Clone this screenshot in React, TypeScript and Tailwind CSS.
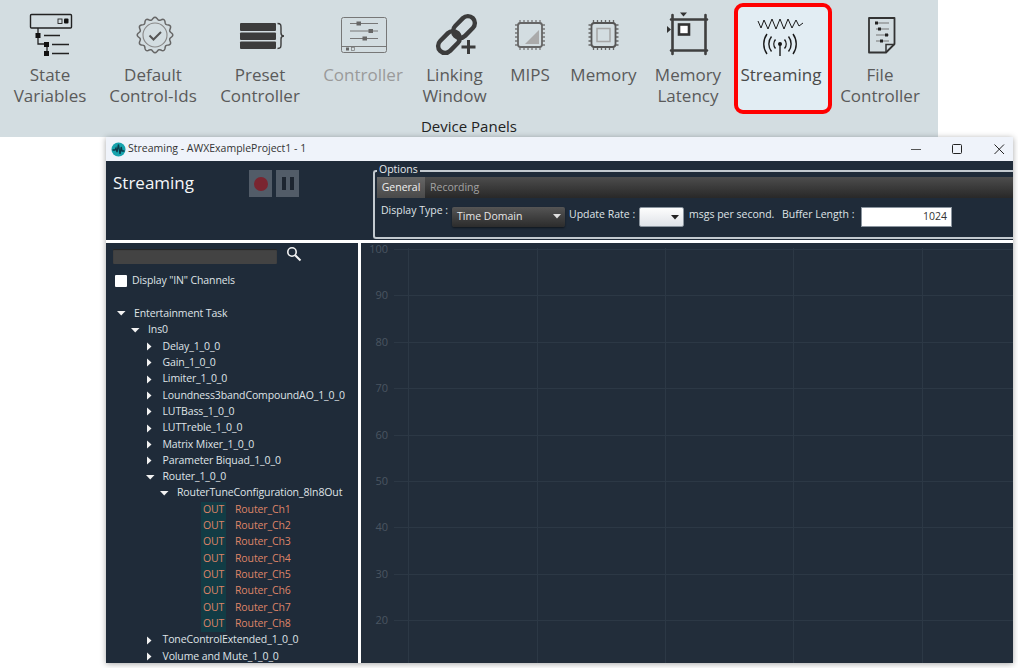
import React from "react";

const gearPath = (() => {
  const cx = 155, cy = 35, pts: string[] = [];
  for (let i = 0; i <= 120; i++) {
    const a = (i / 120) * Math.PI * 2;
    const r = 16.5 + 1.3 * Math.cos(a * 12);
    pts.push(`${(cx + r * Math.cos(a)).toFixed(2)},${(cy + r * Math.sin(a)).toFixed(2)}`);
  }
  return "M" + pts.join("L") + "Z";
})();

function Ico({ cx, children }: { cx: number; children: React.ReactNode }) {
  return (
    <svg className="block shrink-0" width={64} height={57} viewBox={`${cx - 32} 7 64 57`}>
      {children}
    </svg>
  );
}

function ChipPins({ x0, y0, x1, y1, color }: { x0: number; y0: number; x1: number; y1: number; color: string }) {
  const out: React.ReactNode[] = [];
  for (let i = 0; i < 6; i++) {
    const tx = x0 + 5 + (i * (x1 - x0 - 10)) / 5;
    const ty = y0 + 5 + (i * (y1 - y0 - 10)) / 5;
    out.push(<path key={"a" + i} d={`M${tx} ${y0}v3M${tx} ${y1 - 3}v3M${x0} ${ty}h3M${x1 - 3} ${ty}h3`} stroke={color} strokeWidth={1.3} fill="none" />);
  }
  return <>{out}</>;
}

const tools: { lines: string[]; cls: string; cx: number; text: string; icon: React.ReactNode }[] = [
  {
    lines: ["State", "Variables"], cls: "w-[100px] border-transparent", cx: 50, text: "text-[#5a5a5a]",
    icon: (
      <g fill="none" stroke="#222">
        <rect x="30.5" y="14.5" width="41" height="13.5" rx="1" strokeWidth="1.4" />
        <rect x="58" y="19" width="4" height="4.5" strokeWidth="0.9" />
        <rect x="64" y="18.5" width="4.5" height="5" fill="#111" stroke="none" rx="1" />
        <path d="M38 28V44H47V54" strokeWidth="1.3" />
        <rect x="35.5" y="33" width="5" height="5" fill="#111" stroke="none" />
        <rect x="44" y="42" width="5" height="5" fill="#111" stroke="none" />
        <rect x="44" y="51" width="5" height="5" fill="#111" stroke="none" />
        <path d="M44 35.5H60M52 44.5H69M52 53.5H69" strokeWidth="1.5" />
      </g>
    ),
  },
  {
    lines: ["Default", "Control-Ids"], cls: "w-[106px] border-transparent", cx: 153, text: "text-[#5a5a5a]",
    icon: (
      <g fill="none" stroke="#666">
        <path d={gearPath} strokeWidth="1.5" />
        <circle cx="155" cy="35" r="12" strokeWidth="1.1" stroke="#888" />
        <path d="M149.5 35.5L153.5 39.5L161 32" strokeWidth="2" stroke="#555" />
      </g>
    ),
  },
  {
    lines: ["Preset", "Controller"], cls: "w-[108px] border-transparent", cx: 260, text: "text-[#5a5a5a]",
    icon: (
      <g>
        <rect x="240" y="23" width="36" height="8" rx="1" fill="#3c3c3c" />
        <rect x="240" y="32.5" width="36" height="7.5" rx="1" fill="#3c3c3c" />
        <rect x="240" y="41.5" width="36" height="7.5" rx="1" fill="#3c3c3c" />
        <path d="M277.5 23.5C281 23.5 281 25 281 28V33C281 35 282 36 284 36C282 36 281 37 281 39V44C281 47 281 48.5 277.5 48.5" fill="none" stroke="#3c3c3c" strokeWidth="1.4" />
      </g>
    ),
  },
  {
    lines: ["Controller"], cls: "w-[98px] border-transparent", cx: 363, text: "text-[#9a9a9a]",
    icon: (
      <g fill="none" stroke="#777">
        <rect x="341.5" y="17.5" width="45" height="35" rx="2" strokeWidth="1" />
        <path d="M341.5 46.5H386.5" strokeWidth="1" />
        <path d="M350 23.5H378M350 31H378M350 38.5H378" strokeWidth="1" />
        <rect x="356.5" y="21.5" width="4.5" height="4" fill="#666" stroke="none" />
        <rect x="368.5" y="29" width="4.5" height="4" fill="#666" stroke="none" />
        <rect x="362.5" y="36.5" width="4.5" height="4" fill="#666" stroke="none" />
        <rect x="346" y="47.5" width="3" height="3" fill="#666" stroke="none" />
        <rect x="351.5" y="47.5" width="3" height="3" strokeWidth="0.7" />
      </g>
    ),
  },
  {
    lines: ["Linking", "Window"], cls: "w-[85px] border-transparent", cx: 454.5, text: "text-[#5a5a5a]",
    icon: (
      <g fill="none" stroke="#3c3c3c" strokeWidth="4.4">
        <rect x="451" y="20" width="25" height="14" rx="7" transform="rotate(-45 463.5 27)" />
        <rect x="436" y="35" width="25" height="14" rx="7" transform="rotate(-45 448.5 42)" />
        <path d="M468 40V54M461 47H475" stroke="#d3dde1" strokeWidth="7" />
        <path d="M468 40V54M461 47H475" strokeWidth="3" />
      </g>
    ),
  },
  {
    lines: ["MIPS"], cls: "w-[66px] border-transparent", cx: 530, text: "text-[#5a5a5a]",
    icon: (
      <g>
        <ChipPins x0={515} y0={20} x1={545} y1={50} color="#777" />
        <rect x="518" y="23" width="24" height="24" rx="2.5" fill="none" stroke="#666" strokeWidth="1.8" />
        <path d="M525 44H539V30Z" fill="#aaa" />
      </g>
    ),
  },
  {
    lines: ["Memory"], cls: "w-[81px] border-transparent", cx: 603.5, text: "text-[#5a5a5a]",
    icon: (
      <g fill="none">
        <ChipPins x0={588} y0={20} x1={618} y1={50} color="#666" />
        <rect x="591" y="23" width="24" height="24" rx="3" stroke="#555" strokeWidth="1.8" />
        <rect x="596.5" y="28.5" width="13" height="13" stroke="#a5a5a5" strokeWidth="1.5" />
      </g>
    ),
  },
  {
    lines: ["Memory", "Latency"], cls: "w-[88px] border-transparent", cx: 688, text: "text-[#5a5a5a]",
    icon: (
      <g>
        <path d="M671 19.5H707M671 50.5H707M672.5 15V54M705.5 15V54" stroke="#3f3f3f" strokeWidth="2.6" strokeLinecap="round" fill="none" />
        <rect x="679" y="24.5" width="10" height="10" fill="#fff" stroke="#333" strokeWidth="2.6" />
        <path d="M680 12.5H687L683.5 16.5Z" fill="#333" />
        <path d="M667 26L671 29.5L667 33Z" fill="#333" />
      </g>
    ),
  },
  {
    lines: ["Streaming"], cls: "w-[98px] ml-[2px] bg-[#e2edf3] border-[#f00]", cx: 783, text: "text-[#4a4a4a] mr-[4px]",
    icon: (
      <g fill="none" stroke="#1a1a1a">
        <polyline strokeWidth="1" points="758,21 761,28 764,20 768,29 772,19 776,29 780,19 784,29 788,19 792,28 796,20 799,26 803,23" />
        <circle cx="780" cy="44" r="2" fill="#111" stroke="none" />
        <path d="M780 45V56" strokeWidth="1.4" />
        <path d="M775.5 39.5A7 7 0 0 0 775.5 48.5M784.5 39.5A7 7 0 0 1 784.5 48.5" strokeWidth="1.4" />
        <path d="M771.5 36.5A12 12 0 0 0 771.5 51.5M788.5 36.5A12 12 0 0 1 788.5 51.5" strokeWidth="1.4" />
        <path d="M767 34A17 17 0 0 0 767 54M793 34A17 17 0 0 1 793 54" strokeWidth="1.4" />
      </g>
    ),
  },
  {
    lines: ["File", "Controller"], cls: "w-[96px] border-transparent", cx: 880, text: "text-[#5a5a5a]",
    icon: (
      <g fill="none" stroke="#333">
        <path d="M869 18H894.5V44L886 52.5H869Z" strokeWidth="1.8" strokeLinejoin="round" />
        <path d="M886 52.5V44.5H894.5" strokeWidth="1.5" />
        <path d="M876 23H889M876 29H889M876 35H889M876 41H889" strokeWidth="1.2" stroke="#777" />
        <rect x="875" y="21.5" width="3" height="3" fill="#222" stroke="none" />
        <rect x="878" y="27.5" width="3" height="3" fill="#222" stroke="none" />
        <rect x="885" y="33.5" width="3" height="3" fill="#222" stroke="none" />
        <rect x="880" y="39.5" width="3" height="3" fill="#222" stroke="none" />
      </g>
    ),
  },
];

type Row = { label: string; pl: string; arrow?: "right" | "down" };
const rows: Row[] = [
  { label: "Entertainment Task", pl: "pl-[10px]", arrow: "down" },
  { label: "Ins0", pl: "pl-[24px]", arrow: "down" },
  { label: "Delay_1_0_0", pl: "pl-[38.5px]", arrow: "right" },
  { label: "Gain_1_0_0", pl: "pl-[38.5px]", arrow: "right" },
  { label: "Limiter_1_0_0", pl: "pl-[38.5px]", arrow: "right" },
  { label: "Loundness3bandCompoundAO_1_0_0", pl: "pl-[38.5px]", arrow: "right" },
  { label: "LUTBass_1_0_0", pl: "pl-[38.5px]", arrow: "right" },
  { label: "LUTTreble_1_0_0", pl: "pl-[38.5px]", arrow: "right" },
  { label: "Matrix Mixer_1_0_0", pl: "pl-[38.5px]", arrow: "right" },
  { label: "Parameter Biquad_1_0_0", pl: "pl-[38.5px]", arrow: "right" },
  { label: "Router_1_0_0", pl: "pl-[38.5px]", arrow: "down" },
  { label: "RouterTuneConfiguration_8In8Out", pl: "pl-[53px]", arrow: "down" },
];
const channels = [1, 2, 3, 4, 5, 6, 7, 8];

function Arrow({ dir }: { dir: "right" | "down" }) {
  return (
    <span className="w-[18px] shrink-0 flex items-center">
      {dir === "right" ? (
        <svg width="9" height="9" viewBox="0 0 9 9"><path d="M2 0.5L6.5 4.5L2 8.5Z" fill="#f2f2f2" /></svg>
      ) : (
        <svg width="10" height="7" viewBox="0 0 10 7"><path d="M1 1H9.5L5.2 5.5Z" fill="#f2f2f2" /></svg>
      )}
    </span>
  );
}

function TreeRow({ r }: { r: Row }) {
  return (
    <div className={`h-[16.33px] flex items-center whitespace-nowrap ${r.pl}`}>
      {r.arrow && <Arrow dir={r.arrow} />}
      <span>{r.label}</span>
    </div>
  );
}

const yVals = [100, 90, 80, 70, 60, 50, 40, 30, 20];
const yOf = (i: number) => 249 + i * 46.4;
const xLines = [408, 537, 665, 793, 922];

export default function App() {
  return (
    <div className="w-[1018px] h-[668px] bg-white overflow-hidden [font-family:'Open_Sans','Noto_Sans',sans-serif]">
      <div className="w-[938px] h-[137px] bg-[#d3dde1] pt-[3px] flex flex-col">
        <div className="flex h-[111px]">
          {tools.map((t) => (
            <div key={t.lines[0] + t.cx} className={`h-[111px] shrink-0 flex flex-col items-center border-4 rounded-[9px] ${t.cls}`}>
              <Ico cx={t.cx}>{t.icon}</Ico>
              {t.lines.map((l) => (
                <div key={l} className={`whitespace-nowrap text-[17px] leading-[21px] ${t.text}`}>{l}</div>
              ))}
            </div>
          ))}
        </div>
        <div className="text-center text-[15px] leading-[20px] text-[#222] pt-[1.5px]">Device Panels</div>
      </div>

      <div className="ml-[106px] w-[907px] h-[526px] bg-white shadow-[0_1px_6px_rgba(0,0,0,0.35)] flex flex-col relative">
        <div className="h-[24px] bg-[#eff3fa] flex items-center pl-[5px] text-[10.5px] text-[#333] shrink-0">
          <svg width="15" height="15" viewBox="0 0 15 15" className="mr-[2px]">
            <circle cx="7.5" cy="7.5" r="7" fill="#16a3ad" />
            <path d="M1.5 8H4L5 6L6 10L7.5 2.5L9 12L10.2 5L11 9H13.5" fill="none" stroke="#0b3a4a" strokeWidth="1.3" />
          </svg>
          <span>Streaming - AWXExampleProject1 - 1</span>
          <div className="ml-auto flex items-center text-[#222]">
            <svg width="42" height="14" viewBox="0 0 42 14"><path d="M4 7.5H14" stroke="#555" strokeWidth="1" /></svg>
            <svg width="42" height="14" viewBox="0 0 42 14"><rect x="3.5" y="2.5" width="9" height="9" rx="1" fill="none" stroke="#222" strokeWidth="1" /></svg>
            <svg width="22" height="14" viewBox="0 0 22 14"><path d="M3.5 2.5L13 12M13 2.5L3.5 12" stroke="#222" strokeWidth="1" /></svg>
          </div>
        </div>

        <div className="h-[79px] bg-[#1f2b39] flex shrink-0">
          <div className="w-[267px] shrink-0 flex pl-[7px]">
            <div className="w-[136px] pt-[9px] text-[17px] leading-[25px] text-[#f4f6f8]">Streaming</div>
            <div className="flex gap-[4px] pt-[9px]">
              <div className="w-[23px] h-[27px] bg-[#525c68] flex items-center justify-center">
                <div className="w-[14px] h-[14px] rounded-full bg-[#7a2530]" />
              </div>
              <div className="w-[23px] h-[27px] bg-[#525c68] flex items-center justify-center gap-[4px]">
                <div className="w-[4px] h-[13px] bg-[#1d2530]" />
                <div className="w-[4px] h-[13px] bg-[#1d2530]" />
              </div>
            </div>
          </div>
          <div className="flex-1 relative mt-[9px] mb-[1px] border-l-2 border-t-2 border-b-2 border-[#c3cad0] rounded-tl-[3px] rounded-bl-[3px] pl-[2px] pt-[5px] text-[10.5px] text-[#dfe3e7]">
            <span className="absolute -top-[8px] left-[2px] px-[2px] bg-[#1f2b39] text-[10.5px] leading-[11px] text-[#e6e9ec]">Options</span>
            <div className="h-[21px] bg-gradient-to-b from-[#4d4d4d] to-[#282828] flex items-center">
              <div className="w-[48px] h-full flex items-center justify-center bg-gradient-to-b from-[#666] to-[#4a4a4a] text-[#f0f0f0]">General</div>
              <div className="pl-[5px] text-[#a3a3a3]">Recording</div>
            </div>
            <div className="flex items-start pt-[9px] relative">
              <span className="ml-[4px] w-[71px] leading-[14px] -mt-[4px]">Display Type :</span>
              <div className="w-[113px] h-[20px] rounded-[2px] bg-gradient-to-b from-[#555] to-[#2c2c2c] flex items-center pl-[5px] pb-[1px] text-[#e6e6e6] shadow-[0_1px_2px_rgba(0,0,0,0.5)]">
                Time Domain
                <svg className="ml-auto mr-[4px]" width="8" height="5" viewBox="0 0 8 5"><path d="M0 0H8L4 4.5Z" fill="#e0e0e0" /></svg>
              </div>
              <span className="ml-[4px] w-[70px] leading-[14px] whitespace-nowrap">Update Rate :</span>
              <div className="w-[45px] h-[20px] rounded-[2px] bg-gradient-to-b from-[#fdfdfd] to-[#dfe3e8] border border-[#8a949e] flex items-center justify-end pr-[4px]">
                <svg width="8" height="5" viewBox="0 0 8 5"><path d="M0 0H8L4 4.5Z" fill="#222" /></svg>
              </div>
              <span className="ml-[5px] w-[93px] leading-[14px] whitespace-nowrap">msgs per second.</span>
              <span className="w-[79px] leading-[14px] whitespace-nowrap">Buffer Length :</span>
              <div className="w-[91px] h-[20px] bg-white border border-[#8a949e] flex items-center justify-end pr-[4px] text-[#333]">1024</div>
            </div>
          </div>
        </div>

        <div className="flex-1 min-h-0 flex mt-[3px] pt-0 bg-white">
          <div className="w-[252px] shrink-0 bg-[#1f2b39] text-[10.5px] tracking-[-0.12px] text-[#dfe3e7] overflow-hidden">
            <div className="flex items-start pt-[6px] pl-[7px]">
              <div className="w-[164px] h-[15px] bg-[#434343] rounded-[1px] shadow-[inset_0_1px_1px_rgba(0,0,0,0.5)]" />
              <svg className="ml-[9px] -mt-[3px]" width="16" height="16" viewBox="0 0 16 16" fill="none" stroke="#f4f4f4">
                <circle cx="6" cy="6" r="4.2" strokeWidth="1.6" />
                <path d="M9.2 9.2L14.5 14.5" strokeWidth="2" />
              </svg>
            </div>
            <div className="flex items-center pl-[9px] mt-[10px] h-[14px]">
              <div className="w-[12px] h-[12px] bg-white rounded-[1px]" />
              <span className="ml-[5px]">Display "IN" Channels</span>
            </div>
            <div className="mt-[17.6px]">
              {rows.map((r) => <TreeRow key={r.label} r={r} />)}
              {channels.map((n) => (
                <div key={n} className="h-[16.33px] flex items-center pl-[95px] whitespace-nowrap text-[#de8468]">
                  <span className="w-[25px] h-full bg-[#123c45] flex items-center justify-center">OUT</span>
                  <span className="ml-[9px]">Router_Ch{n}</span>
                </div>
              ))}
              <TreeRow r={{ label: "ToneControlExtended_1_0_0", pl: "pl-[38.5px]", arrow: "right" }} />
              <TreeRow r={{ label: "Volume and Mute_1_0_0", pl: "pl-[38.5px]", arrow: "right" }} />
            </div>
          </div>
          <div className="w-[3px] shrink-0 bg-white" />
          <div className="flex-1 min-w-0 bg-[#222d3a]">
            <svg className="block" width={652} height={420} viewBox="361 243 652 420">
              {xLines.map((x) => <path key={x} d={`M${x + 0.5} 248V663`} stroke="#2c3845" strokeWidth="1" />)}
              {yVals.map((v, i) => (
                <g key={v}>
                  <path d={`M394 ${Math.round(yOf(i)) + 0.5}H1013`} stroke="#2c3845" strokeWidth="1" />
                  <text x="388" y={yOf(i) + 4} textAnchor="end" fontSize="11" fill="#4a5561">{v}</text>
                </g>
              ))}
            </svg>
          </div>
        </div>
      </div>
    </div>
  );
}
